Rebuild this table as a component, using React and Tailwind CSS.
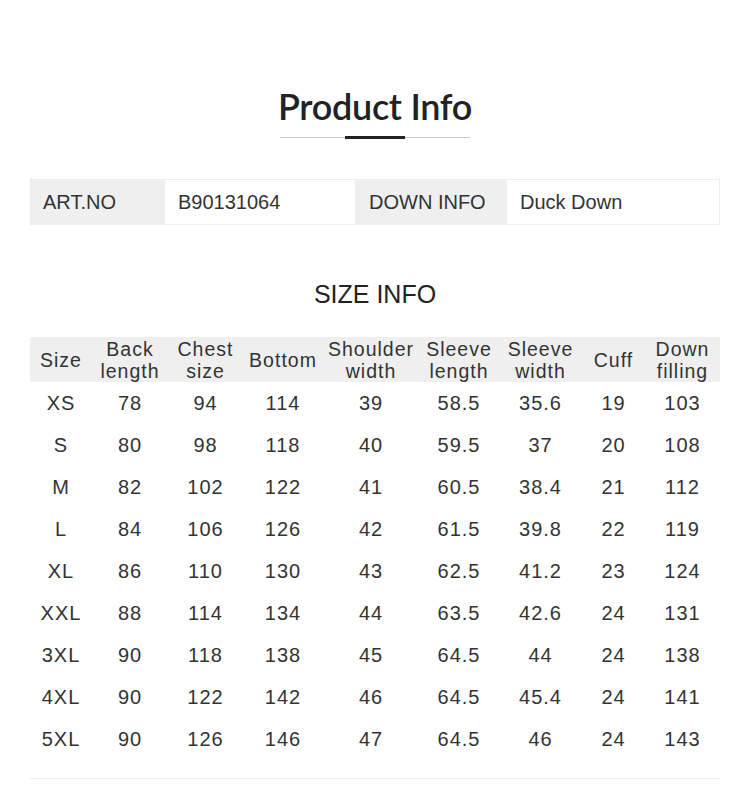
const INFO = [
  { label: 'ART.NO', value: 'B90131064' },
  { label: 'DOWN INFO', value: 'Duck Down' },
]

const HEADERS = [
  ['Size'],
  ['Back', 'length'],
  ['Chest', 'size'],
  ['Bottom'],
  ['Shoulder', 'width'],
  ['Sleeve', 'length'],
  ['Sleeve', 'width'],
  ['Cuff'],
  ['Down', 'filling'],
]

const ROWS = [
  ['XS', '78', '94', '114', '39', '58.5', '35.6', '19', '103'],
  ['S', '80', '98', '118', '40', '59.5', '37', '20', '108'],
  ['M', '82', '102', '122', '41', '60.5', '38.4', '21', '112'],
  ['L', '84', '106', '126', '42', '61.5', '39.8', '22', '119'],
  ['XL', '86', '110', '130', '43', '62.5', '41.2', '23', '124'],
  ['XXL', '88', '114', '134', '44', '63.5', '42.6', '24', '131'],
  ['3XL', '90', '118', '138', '45', '64.5', '44', '24', '138'],
  ['4XL', '90', '122', '142', '46', '64.5', '45.4', '24', '141'],
  ['5XL', '90', '126', '146', '47', '64.5', '46', '24', '143'],
]

const GRID = 'grid grid-cols-[62px_76px_75px_80px_96px_80px_83px_63px_75px]'

export default function App() {
  return (
    <div className="w-[750px] h-[799px] bg-white overflow-hidden [font-family:'Liberation_Sans',Arial,sans-serif] text-[#333]">
      {/* Title */}
      <div className="pt-[84px] flex flex-col items-center">
        <h1 className="[font-family:Lato,sans-serif] font-semibold text-[36px] leading-[44px] text-[#222] tracking-[-0.3px]">
          Product Info
        </h1>
        <div className="relative mt-[9px] w-[190px] h-px bg-[#c8c8c8]">
          <span className="absolute left-[65px] -top-px w-[60px] h-[3px] bg-[#222]" />
        </div>
      </div>

      {/* Basic info */}
      <div className="mx-[30px] mt-[41px] flex h-[46px] border border-[#ececec] text-[20px]">
        <div className="w-[134px] bg-[#efefef] flex items-center pl-[12px]">{INFO[0].label}</div>
        <div className="w-[190px] bg-white flex items-center pl-[13px]">{INFO[0].value}</div>
        <div className="w-[152px] bg-[#efefef] flex items-center pl-[14px]">{INFO[1].label}</div>
        <div className="flex-1 bg-white flex items-center pl-[13px]">{INFO[1].value}</div>
      </div>

      {/* Size info */}
      <h2 className="mt-[54px] text-center text-[25px] leading-[30px] text-[#222]">SIZE INFO</h2>

      <div className="mx-[30px] mt-[28px] tracking-[1px] text-[20px]">
        <div className={`${GRID} h-[45px] bg-[#efefef] text-[19.5px] leading-[22px]`}>
          {HEADERS.map((h, i) => (
            <div key={i} className="flex flex-col items-center justify-center text-center">
              {h.map((line) => <span key={line}>{line}</span>)}
            </div>
          ))}
        </div>
        {ROWS.map((row) => (
          <div key={row[0]} className={`${GRID} h-[42px]`}>
            {row.map((cell, i) => (
              <div key={i} className="flex items-center justify-center">{cell}</div>
            ))}
          </div>
        ))}
        <div className="mt-[18px] h-px bg-[#ececec]" />
      </div>
    </div>
  )
}
